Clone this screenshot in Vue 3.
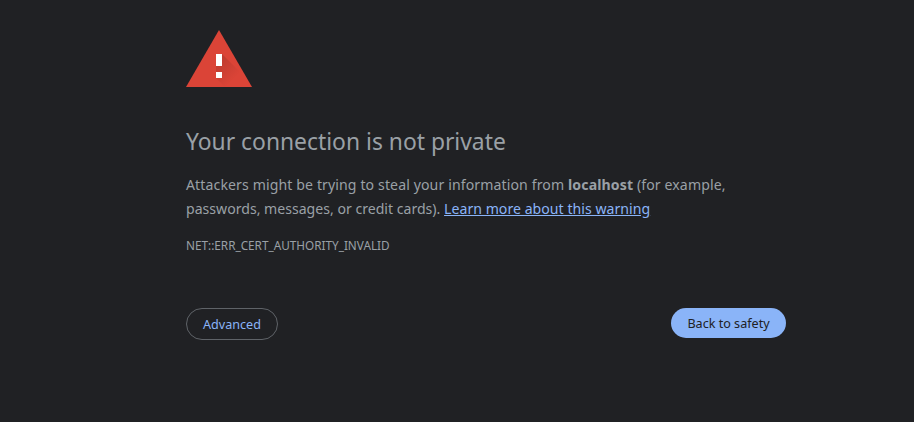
<script setup>
</script>

<template>
  <main class="page">
    <div class="content">
      <svg class="icon" width="66" height="57" viewBox="0 0 66 57" aria-hidden="true">
        <defs>
          <linearGradient id="mark-shadow" gradientUnits="userSpaceOnUse" x1="33" y1="30" x2="50" y2="47">
            <stop offset="0" stop-color="#a8352a" stop-opacity="0.55" />
            <stop offset="1" stop-color="#a8352a" stop-opacity="0" />
          </linearGradient>
        </defs>
        <path d="M33 0 L66 57 H0 Z" fill="#db4437" />
        <path d="M36 24 L58 46 L47 57 H39 L30 48 V36 Z" fill="url(#mark-shadow)" />
        <rect x="30" y="24" width="6" height="12" fill="#fff" />
        <rect x="30" y="42" width="6" height="6" fill="#fff" />
      </svg>
      <h1 class="title">Your connection is not private</h1>
      <p class="body">
        <span class="first-line">Attackers might be trying to steal your information from <strong>localhost</strong> (for example,</span><br />
        passwords, messages, or credit cards). <a class="link" href="#">Learn more about this warning</a>
      </p>
      <div class="code">NET::ERR_CERT_AUTHORITY_INVALID</div>
      <div class="actions">
        <button class="btn secondary">Advanced</button>
        <button class="btn primary">Back to safety</button>
      </div>
    </div>
  </main>
</template>

<style>
html, body { margin: 0; background: #202124; }
</style>

<style scoped>
.page {
  height: 422px;
  background: #202124;
  padding-left: 186px;
  overflow: hidden;
  font-family: "Noto Sans", "Open Sans", sans-serif;
  color: #9aa0a6;
}
.content {
  width: 600px;
  padding-top: 30px;
  box-sizing: border-box;
}
.icon { display: block; }
.title {
  margin: 39px 0 0;
  font-size: 22.85px;
  font-weight: 400;
  line-height: 32px;
  color: #9aa0a6;
}
.body {
  margin: 15px 0 0;
  font-size: 14.1px;
  line-height: 24px;
}
.first-line { letter-spacing: 0.11px; }
.body strong { font-weight: 700; }
.link { color: #8ab4f8; text-decoration: underline; letter-spacing: 0.03px; }
.code {
  margin-top: 16px;
  font-size: 11.75px;
  line-height: 16px;
}
.actions {
  margin-top: 55px;
  display: flex;
  justify-content: space-between;
  align-items: flex-start;
}
.btn {
  height: 32px;
  border-radius: 16px;
  font-family: inherit;
  font-size: 12.6px;
  padding: 0;
  box-sizing: border-box;
}
.secondary {
  width: 92px;
  background: transparent;
  border: 1px solid #5f6368;
  color: #8ab4f8;
}
.primary {
  width: 115px;
  height: 30px;
  background: #8ab4f8;
  border: 0;
  color: #202124;
}
</style>
